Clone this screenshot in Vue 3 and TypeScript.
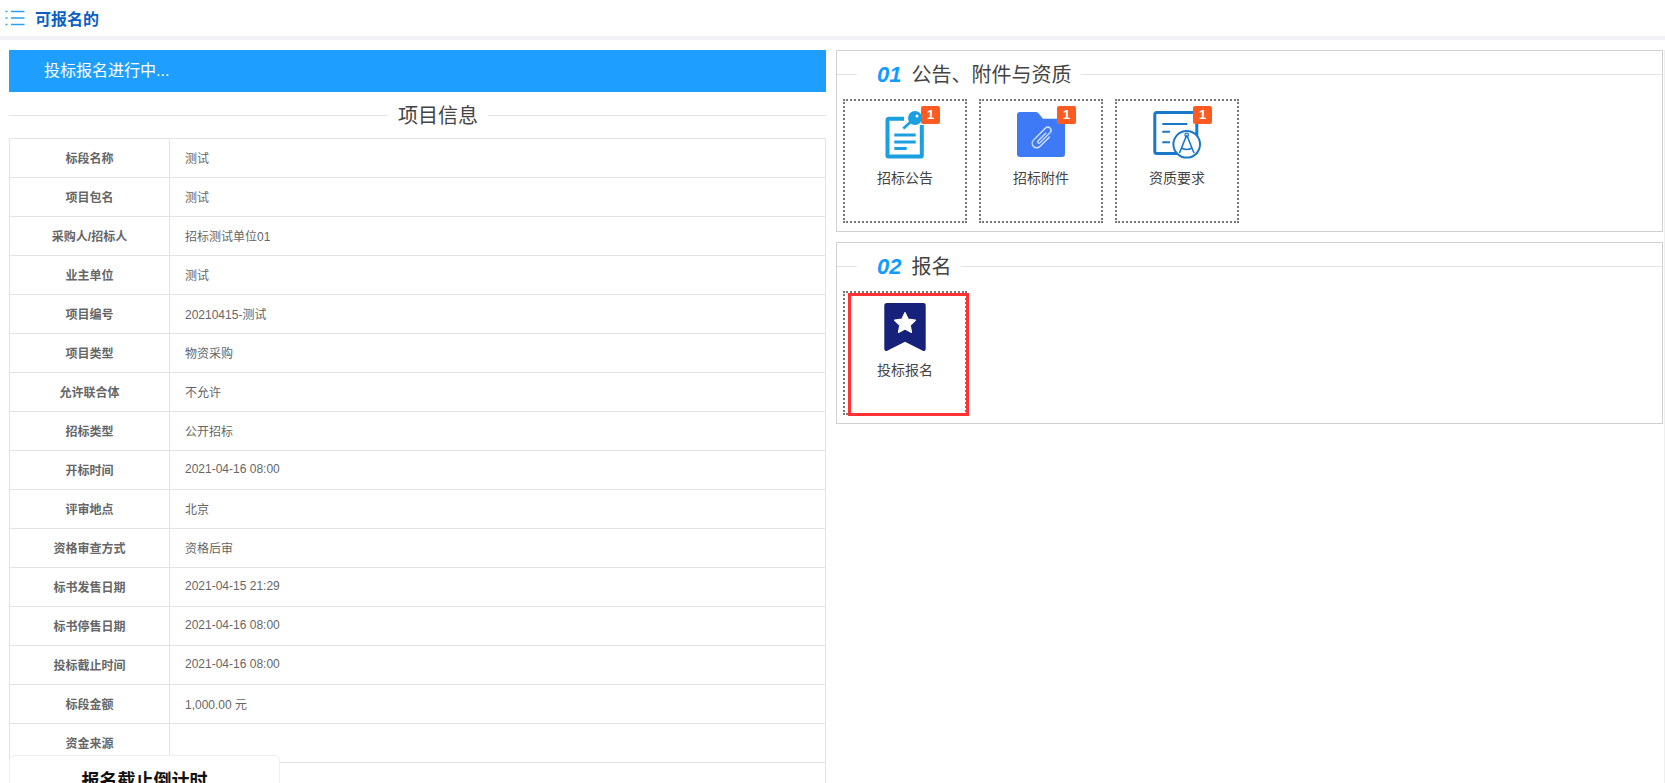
<script setup lang="ts">
const rows: { label: string; value: string }[] = [
  { label: '标段名称', value: '测试' },
  { label: '项目包名', value: '测试' },
  { label: '采购人/招标人', value: '招标测试单位01' },
  { label: '业主单位', value: '测试' },
  { label: '项目编号', value: '20210415-测试' },
  { label: '项目类型', value: '物资采购' },
  { label: '允许联合体', value: '不允许' },
  { label: '招标类型', value: '公开招标' },
  { label: '开标时间', value: '2021-04-16 08:00' },
  { label: '评审地点', value: '北京' },
  { label: '资格审查方式', value: '资格后审' },
  { label: '标书发售日期', value: '2021-04-15 21:29' },
  { label: '标书停售日期', value: '2021-04-16 08:00' },
  { label: '投标截止时间', value: '2021-04-16 08:00' },
  { label: '标段金额', value: '1,000.00 元' },
  { label: '资金来源', value: '' },
  { label: '', value: '' },
];
</script>

<template>
  <div class="page">
    <header class="top">
      <svg class="list-icon" width="20" height="18" viewBox="0 0 20 18" fill="none" stroke="#2f9ff5" stroke-width="1.4">
        <path d="M0.5 2.5h2M6 2.5h13.500M0.500 9h2M6 9h13.500M0.500 15.500h2M6 15.500h13.500" />
      </svg>
      <span class="top-title">可报名的</span>
    </header>

    <div class="main">
      <section class="left">
        <div class="banner">投标报名进行中...</div>
        <div class="info-title">
          <span class="line first"></span>
          <span class="info-text">项目信息</span>
          <span class="line"></span>
        </div>
        <table class="info">
          <tbody>
            <tr v-for="(row, i) in rows" :key="i">
              <th>{{ row.label }}</th>
              <td>{{ row.value }}</td>
            </tr>
          </tbody>
        </table>
      </section>

      <section class="right">
        <div class="panel">
          <div class="legend">
            <span class="line stub"></span>
            <span class="legend-text"><i>01</i>公告、附件与资质</span>
            <span class="line"></span>
          </div>
          <div class="tiles">
            <div class="tile">
              <svg class="icon" width="48" height="48" viewBox="0 0 48 48" fill="none">
                <path d="M23 7.700H8a1.500 1.500 0 0 0-1.500 1.500v35.600a.700.700 0 0 0 .700.700h32.900a.700.700 0 0 0 .700-.700V14" stroke="#1a9fe0" stroke-width="4" />
                <path d="M13.300 24h21.400M13.300 31h21.400M13.300 37.500h12.400" stroke="#1a9fe0" stroke-width="3" />
                <path d="M22.300 17.500l9-8" stroke="#1a9fe0" stroke-width="2.800" />
                <circle cx="34" cy="7" r="7" fill="#1a9fe0" />
                <circle cx="36" cy="5" r="1.500" fill="#fff" />
              </svg>
              <span class="badge">1</span>
              <span class="tile-label">招标公告</span>
            </div>
            <div class="tile">
              <svg class="icon" width="48" height="48" viewBox="0 0 48 48" fill="none">
                <path d="M0 4a3 3 0 0 1 3-3h16a3 3 0 0 1 2.200 1l4.800 5.700h19a3 3 0 0 1 3 3V43a3 3 0 0 1-3 3H3a3 3 0 0 1-3-3z" fill="#3f7af6" />
                <g transform="rotate(45 25 27)">
                  <path d="M29.500 21v13.500a4.500 4.500 0 0 1-9 0V17.500a3.200 3.200 0 0 1 6.400 0V32a1.300 1.300 0 0 1-2.600 0V21" stroke="#d5e2fd" stroke-width="1.400" stroke-linecap="round" />
                </g>
              </svg>
              <span class="badge">1</span>
              <span class="tile-label">招标附件</span>
            </div>
            <div class="tile">
              <svg class="icon" width="48" height="48" viewBox="0 0 48 48" fill="none">
                <rect x="1.800" y="1.500" width="42" height="41" rx="2" stroke="#1a78c8" stroke-width="3" />
                <path d="M9.300 13h25M9.300 20.700H17M9.300 31.300H17" stroke="#1a78c8" stroke-width="2" />
                <circle cx="33.700" cy="33.300" r="13.300" fill="#fff" stroke="#1a78c8" stroke-width="2" />
                <path d="M33.700 24L26.500 42M33.700 24L41 42M28.500 37q5.200 3 10.400 0" stroke="#1a78c8" stroke-width="1.600" />
                <circle cx="33.700" cy="24" r="1.800" stroke="#1a78c8" stroke-width="1.200" />
              </svg>
              <span class="badge">1</span>
              <span class="tile-label">资质要求</span>
            </div>
          </div>
        </div>

        <div class="panel">
          <div class="legend">
            <span class="line stub"></span>
            <span class="legend-text"><i>02</i>报名</span>
            <span class="line"></span>
          </div>
          <div class="tiles">
            <div class="tile">
              <svg class="icon" width="48" height="48" viewBox="0 0 48 48" fill="none">
                <path d="M3.300 2.500A2.500 2.500 0 0 1 5.800 0h36.400a2.500 2.500 0 0 1 2.500 2.500V46a2 2 0 0 1-2.900 1.700L24 38.700 6.200 47.700A2 2 0 0 1 3.300 46z" fill="#15217a" />
                <path d="M24 9.500l3.200 6.700 7.200 1-5.200 5 1.300 7.200-6.500-3.500-6.500 3.500 1.300-7.200-5.200-5 7.200-1z" fill="#fff" stroke="#fff" stroke-width="1.200" stroke-linejoin="round" />
              </svg>
              <span class="tile-label">投标报名</span>
              <span class="highlight"></span>
            </div>
          </div>
        </div>
      </section>

      <div class="track"></div>
    </div>

    <aside class="countdown">
      <h3>报名截止倒计时</h3>
    </aside>
  </div>
</template>

<style>
html,
body {
  margin: 0;
  background: #fff;
  overflow: hidden;
}
</style>

<style scoped>
.page {
  position: relative;
  height: 783px;
  overflow: hidden;
  background: #fff;
  font-family: "Liberation Sans", "Noto Sans CJK SC", sans-serif;
  color: #333;
}

.top {
  height: 36px;
  display: flex;
  align-items: center;
  padding-left: 5px;
  box-sizing: border-box;
}

.list-icon {
  margin-right: 10px;
}

.top-title {
  font-size: 16px;
  font-weight: 700;
  color: #0b5fc4;
}

.main {
  display: flex;
  align-items: flex-start;
  border-top: 4px solid #f1f1f6;
  padding: 10px 0 0 9px;
}

.left {
  width: 817px;
  flex: none;
}

.banner {
  height: 42px;
  line-height: 42px;
  padding-left: 35px;
  background: #1e9fff;
  color: #fff;
  font-size: 16px;
}

.info-title {
  display: flex;
  align-items: center;
  height: 46px;
}

.line {
  flex: 1;
  height: 1px;
  background: #e4e4e4;
}

.line.first {
  flex: none;
  width: 379px;
}

.info-text {
  padding: 0 10px 2px;
  font-size: 20px;
  color: #444;
}

.info {
  width: 100%;
  border-collapse: collapse;
  table-layout: fixed;
  font-size: 12px;
}

.info th,
.info td {
  height: 39px;
  padding: 0 0 2px;
  box-sizing: border-box;
  border: 1px solid #e4e4e4;
  color: #666;
}

.info th {
  width: 160px;
  text-align: center;
  font-weight: 700;
}

.info td {
  padding-left: 15px;
}

.right {
  width: 827px;
  margin-left: 10px;
  flex: none;
  display: flex;
  flex-direction: column;
  gap: 10px;
}

.panel {
  height: 182px;
  box-sizing: border-box;
  border: 1px solid #d0d0d0;
}

.legend {
  display: flex;
  align-items: center;
  height: 46px;
}

.line.stub {
  flex: none;
  width: 20px;
}

.legend-text {
  padding: 0 10px 2px 20px;
  font-size: 20px;
  color: #444;
  white-space: nowrap;
}

.legend-text i {
  margin-right: 10px;
  font-size: 22px;
  font-weight: 700;
  color: #0f9bff;
}

.tiles {
  display: flex;
  gap: 12px;
  padding: 2px 0 0 6px;
}

.tile {
  position: relative;
  width: 124px;
  height: 124px;
  box-sizing: border-box;
  border: 2px dotted #777;
  display: flex;
  flex-direction: column;
  align-items: center;
  padding-top: 10px;
}

.tile-label {
  margin-top: 9px;
  font-size: 14px;
  line-height: 20px;
  color: #444;
}

.badge {
  position: absolute;
  top: 5px;
  left: 76px;
  width: 19px;
  height: 18px;
  border-radius: 2px;
  background: #ff5a22;
  color: #fff;
  font-size: 13px;
  font-weight: 700;
  line-height: 18px;
  text-align: center;
}

.highlight {
  position: absolute;
  left: 3px;
  top: 0;
  width: 121px;
  height: 123px;
  box-sizing: border-box;
  border: 3px solid #f33;
}

.track {
  width: 2px;
  flex: none;
  margin-left: 1px;
  height: 733px;
  background: #efefef;
}

.countdown {
  position: absolute;
  left: 9px;
  top: 755px;
  width: 271px;
  height: 60px;
  box-sizing: border-box;
  border: 1px solid #eee;
  border-radius: 6px;
  background: #fff;
}

.countdown h3 {
  margin: 14px 0 0;
  font-size: 18px;
  line-height: 22px;
  font-weight: 700;
  color: #111;
  text-align: center;
}
</style>
